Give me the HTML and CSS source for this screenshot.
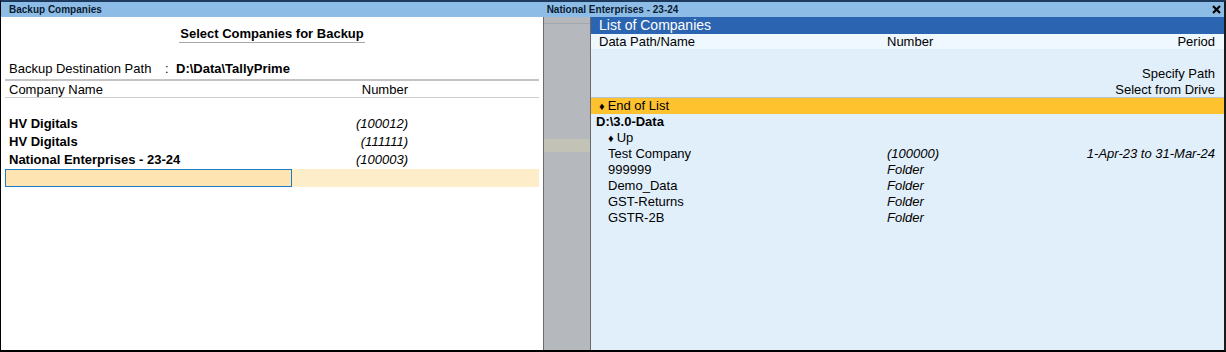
FILE: index.html
```html
<!DOCTYPE html>
<html lang="en">
<head>
    <meta charset="UTF-8">
    <title>Backup Companies</title>
    <link rel="stylesheet" href="styles.css">
</head>
<body>
    <div class="window">
        <div class="titlebar">
            <span class="title-left">Backup Companies</span>
            <span class="title-center">National Enterprises - 23-24</span>
            <span class="title-right">
                <svg width="9" height="9" viewBox="0 0 9 9"><path d="M1 1L8 8M8 1L1 8" stroke="#000" stroke-width="2.2"/></svg>
            </span>
        </div>
        <div class="main">
            <div class="left">
                <div class="heading"><span>Select Companies for Backup</span></div>
                <div class="dest">
                    <span class="dest-label">Backup Destination Path</span>
                    <span class="dest-colon">:</span>
                    <span class="dest-value">D:\Data\TallyPrime</span>
                </div>
                <div class="col-head">
                    <span class="c-name">Company Name</span>
                    <span class="c-num">Number</span>
                </div>
                <div class="rows">
                    <div class="row blank"></div>
                    <div class="row"><span class="c-name">HV Digitals</span><span class="c-num">(100012)</span></div>
                    <div class="row"><span class="c-name">HV Digitals</span><span class="c-num">(111111)</span></div>
                    <div class="row"><span class="c-name">National Enterprises - 23-24</span><span class="c-num">(100003)</span></div>
                    <div class="input-row"><div class="input-box"></div></div>
                </div>
            </div>
            <div class="gutter">
                <div class="gutter-line"></div>
                <div class="gutter-band"></div>
            </div>
            <div class="right">
                <div class="list-title">List of Companies</div>
                <div class="list-head">
                    <span class="l-name">Data Path/Name</span>
                    <span class="l-num">Number</span>
                    <span class="l-period">Period</span>
                </div>
                <div class="options">
                    <div class="opt">Specify Path</div>
                    <div class="opt">Select from Drive</div>
                </div>
                <div class="item selected"><span class="diamond">&#9830;</span> End of List</div>
                <div class="item path">D:\3.0-Data</div>
                <div class="item sub"><span class="diamond">&#9830;</span> Up</div>
                <div class="item sub">
                    <span class="l-name">Test Company</span>
                    <span class="l-num">(100000)</span>
                    <span class="l-period">1-Apr-23 to 31-Mar-24</span>
                </div>
                <div class="item sub"><span class="l-name">999999</span><span class="l-num">Folder</span></div>
                <div class="item sub"><span class="l-name">Demo_Data</span><span class="l-num">Folder</span></div>
                <div class="item sub"><span class="l-name">GST-Returns</span><span class="l-num">Folder</span></div>
                <div class="item sub"><span class="l-name">GSTR-2B</span><span class="l-num">Folder</span></div>
            </div>
        </div>
    </div>
</body>
</html>
```

FILE: styles.css
```css
* {
    box-sizing: border-box;
}
body {
    margin: 0;
    font-family: "Liberation Sans", Arial, sans-serif;
    font-size: 13px;
    color: #000;
    background: #fff;
}
.window {
    width: 1226px;
    height: 352px;
    border-top: 2px solid #1d3a5e;
    border-left: 1px solid #000;
    border-right: 2px solid #1a1a1a;
    border-bottom: 2px solid #000;
    display: flex;
    flex-direction: column;
}
.titlebar {
    height: 15px;
    background: #8dbde6;
    display: grid;
    grid-template-columns: 1fr auto 1fr;
    align-items: center;
    font-size: 10px;
    font-weight: bold;
    color: #0a1a30;
}
.title-left {
    padding-left: 8px;
}
.title-right {
    justify-self: end;
    padding-right: 3px;
    display: flex;
}
.main {
    flex: 1;
    display: flex;
}

/* left form */
.left {
    width: 543px;
    border-right: 1px solid #6b6b6b;
    background: #fff;
    padding: 0 4px;
}
.heading {
    text-align: center;
    padding-top: 9px;
    height: 25px;
    font-size: 13px;
    font-weight: bold;
}
.heading span {
    display: inline-block;
    border-bottom: 1px solid #a9a9a9;
    padding: 0 1px 1px;
    line-height: 14px;
}
.dest {
    display: flex;
    margin-top: 20px;
    height: 19px;
    padding-left: 4px;
    line-height: 14px;
    border-bottom: 2px solid #c4c4c4;
}
.dest-label {
    width: 156px;
}
.dest-colon {
    width: 11px;
}
.dest-value {
    font-weight: bold;
}
.col-head {
    display: flex;
    height: 17px;
    line-height: 18px;
    padding-left: 4px;
    border-bottom: 1px solid #cfcfcf;
}
.c-name {
    width: 345px;
}
.c-num {
    width: 54px;
    text-align: right;
}
.row {
    display: flex;
    height: 18px;
    line-height: 18px;
    padding-left: 4px;
    font-weight: bold;
}
.row.blank {
    height: 17px;
}
.row .c-num {
    font-weight: normal;
    font-style: italic;
}
.input-row {
    height: 18px;
    width: 534px;
    margin-left: 0;
    background: #fdedc8;
}
.input-box {
    width: 287px;
    height: 18px;
    background: #fee4b0;
    border: 1px solid #1d7bc6;
}

/* gray gutter */
.gutter {
    width: 47px;
    background: #b5b9bd;
    border-right: 1px solid #6b6b6b;
}
.gutter-line {
    height: 1px;
    margin-top: 6px;
    background: #a4a8ac;
}
.gutter-band {
    height: 13px;
    margin-top: 115px;
    background: #c3c2b6;
}

/* right list */
.right {
    flex: 1;
    background: #e1effb;
}
.list-title {
    height: 17px;
    background: #2b64b0;
    color: #fff;
    font-size: 14px;
    line-height: 17px;
    padding-left: 8px;
}
.list-head {
    display: flex;
    height: 15px;
    line-height: 15px;
    background: #eef8fe;
    padding: 0 9px 0 8px;
}
.l-name {
    width: 288px;
}
.l-num {
    width: 120px;
    font-style: italic;
}
.l-period {
    flex: 1;
    text-align: right;
    font-style: italic;
}
.list-head .l-num,
.list-head .l-period {
    font-style: normal;
}
.options {
    padding: 17px 9px 0 0;
    height: 49px;
    border-bottom: 1px solid #b7c2cc;
}
.opt {
    text-align: right;
    height: 16px;
    line-height: 16px;
}
.item {
    display: flex;
    height: 16px;
    line-height: 16px;
    padding: 0 9px 0 17px;
}
.item.selected {
    background: #fec22f;
    padding-left: 8px;
}
.item.path {
    font-weight: bold;
    padding-left: 5px;
}
.item.sub .l-name {
    width: 279px;
}
.diamond {
    font-size: 11px;
    margin-right: 3px;
}
```
